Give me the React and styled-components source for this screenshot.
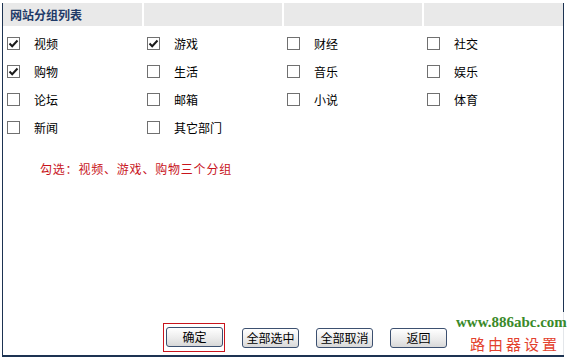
import React from "react";
import styled, { createGlobalStyle } from "styled-components";

const Global = createGlobalStyle`
  html, body { margin: 0; padding: 0; background: #fff; }
  body { font-family: "Noto Sans CJK SC", "Noto Sans", sans-serif; font-size: 12px; color: #000; }
`;

const Page = styled.div`
  width: 567px;
  height: 361px;
  position: relative;
  overflow: hidden;
  padding-top: 3px;
  box-sizing: border-box;
`;

const Frame = styled.div`
  margin-left: 2px;
  width: 562px;
  height: 354px;
  box-sizing: border-box;
  border-left: 1px solid #1d3352;
  border-right: 1px solid #1d3352;
  border-bottom: 2px solid #1d3352;
  display: flex;
  flex-direction: column;
`;

const HeaderRow = styled.div`
  display: grid;
  grid-template-columns: 139px 138px 138px 1fr;
  column-gap: 2px;
  height: 23px;
`;

const HeaderCell = styled.div`
  background: #e9e9e9;
  display: flex;
  align-items: center;
  padding-left: 7px;
  font-weight: bold;
  font-size: 12px;
  color: #1f3a68;
`;

const Grid = styled.div`
  display: grid;
  grid-template-columns: 140px 140px 140px 1fr;
  grid-auto-rows: 28px;
  padding-top: 3px;
`;

const Item = styled.label`
  display: flex;
  align-items: center;
  padding-left: 4px;
  gap: 14px;
  font-size: 12px;
`;

const Box = styled.span`
  width: 11px;
  height: 11px;
  border: 1px solid #707070;
  background: #fff;
  display: flex;
  align-items: center;
  justify-content: center;
`;

const Note = styled.div`
  margin-top: 19px;
  padding-left: 37px;
  color: #c8141c;
  font-size: 12px;
  letter-spacing: 0.8px;
`;

const Spacer = styled.div`
  flex: 1;
`;

const Buttons = styled.div`
  display: flex;
  gap: 17px;
  padding-left: 160px;
  padding-bottom: 3px;
  align-items: center;
`;

const Highlight = styled.div`
  border: 1px solid #c8141c;
  padding: 3px 1px 4px 2px;
  display: flex;
`;

const Btn = styled.button`
  width: 57px;
  height: 20px;
  padding: 0;
  border: 1px solid #3c5070;
  border-radius: 3px;
  background: linear-gradient(#ffffff, #eaeaea 60%, #d8d8d8);
  font-family: "Noto Sans CJK SC", sans-serif;
  font-size: 12px;
  color: #000;
  line-height: 18px;
`;

const Watermark = styled.div`
  position: absolute;
  left: 451px;
  top: 312px;
  width: 116px;
  padding-left: 5px;
  box-sizing: border-box;
  display: flex;
  flex-direction: column;
  align-items: flex-start;
  background: rgba(255,255,255,0.88);
`;

const Url = styled.div`
  font-family: "Liberation Serif", serif;
  font-weight: bold;
  font-size: 15px;
  color: #3a8a2a;
  line-height: 21px;
  white-space: nowrap;
`;

const Brand = styled.div`
  font-family: "Noto Sans CJK SC", sans-serif;
  font-size: 15px;
  letter-spacing: 3px;
  color: #e3412d;
  line-height: 22px;
  padding-left: 14px;
  white-space: nowrap;
`;

const Check = () => (
  <svg width="11" height="11" viewBox="0 0 11 11">
    <path d="M1.5 5.5 L4.2 8.2 L9.5 2.5" fill="none" stroke="#1a1a1a" strokeWidth="2" />
  </svg>
);

const items = [
  ["视频", true], ["游戏", true], ["财经", false], ["社交", false],
  ["购物", true], ["生活", false], ["音乐", false], ["娱乐", false],
  ["论坛", false], ["邮箱", false], ["小说", false], ["体育", false],
  ["新闻", false], ["其它部门", false],
];

export default function App() {
  return (
    <>
      <Global />
      <Page>
        <Frame>
          <HeaderRow>
            <HeaderCell>网站分组列表</HeaderCell>
            <HeaderCell />
            <HeaderCell />
            <HeaderCell />
          </HeaderRow>
          <Grid>
            {items.map(([name, on]) => (
              <Item key={name}>
                <Box>{on && <Check />}</Box>
                {name}
              </Item>
            ))}
          </Grid>
          <Note>勾选：视频、游戏、购物三个分组</Note>
          <Spacer />
          <Buttons>
            <Highlight><Btn>确定</Btn></Highlight>
            <Btn>全部选中</Btn>
            <Btn>全部取消</Btn>
            <Btn>返回</Btn>
          </Buttons>
        </Frame>
        <Watermark>
          <Url>www.886abc.com</Url>
          <Brand>路由器设置</Brand>
        </Watermark>
      </Page>
    </>
  );
}
